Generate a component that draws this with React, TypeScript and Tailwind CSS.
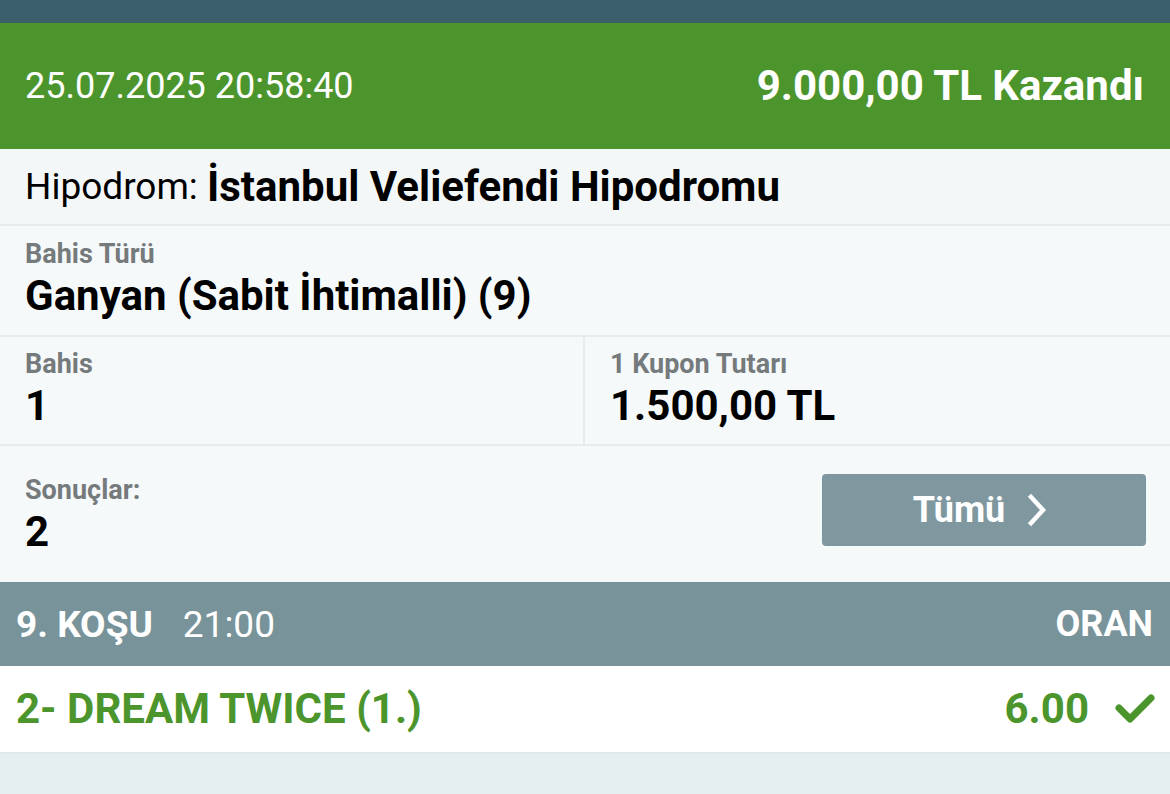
import React from 'react';

const font = { fontFamily: 'Roboto, "Noto Sans", sans-serif' };

const Chevron = () => (
  <svg className="ml-5 h-9 w-6" viewBox="0 0 24 36" fill="none" stroke="currentColor" strokeWidth="4.5" strokeLinecap="square">
    <polyline points="6,5 18,18 6,31" />
  </svg>
);

const Check = () => (
  <svg className="ml-[26px] h-[30px] w-[40px]" viewBox="0 0 40 30" fill="none" stroke="currentColor" strokeWidth="7" strokeLinecap="round" strokeLinejoin="round">
    <path d="M36 4 15 25 4 14" />
  </svg>
);

const Field = ({ label, value }: { label: string; value: string }) => (
  <div className="flex flex-col">
    <span className="text-[27px] font-bold leading-[30px] text-[#757a7c]">{label}</span>
    <span className="mt-[4px] text-[42px] font-bold leading-[46px] text-black">{value}</span>
  </div>
);

export default function App() {
  return (
    <div className="flex h-[794px] w-[1170px] flex-col overflow-hidden bg-[#e5eef1]" style={font}>
      <div className="h-[23px] bg-[#3b5f6b]" />
      <div className="flex h-[126px] items-center justify-between bg-[#4c952c] pl-[25px] pr-[26px] text-white">
        <span className="text-[36px] leading-none">25.07.2025 20:58:40</span>
        <span className="text-[42px] font-bold leading-none">9.000,00 TL Kazandı</span>
      </div>
      <div className="flex h-[77px] items-center border-b-2 border-[#e4ecee] bg-[#f4f7f8] pl-[25px] text-[37px] leading-none text-black">
        Hipodrom:&nbsp;<span className="text-[42px] font-bold">İstanbul Veliefendi Hipodromu</span>
      </div>
      <div className="flex h-[111px] flex-col justify-center border-b-2 border-[#e4ecee] bg-[#f5f9fa] pl-[25px] pb-[4px]">
        <Field label="Bahis Türü" value="Ganyan (Sabit İhtimalli) (9)" />
      </div>
      <div className="grid h-[109px] grid-cols-2 border-b-2 border-[#e4ecee] bg-[#f5f9fa]">
        <div className="flex flex-col justify-center border-r-2 border-[#e4ecee] pl-[25px] pb-[4px]">
          <Field label="Bahis" value="1" />
        </div>
        <div className="flex flex-col justify-center pl-[25px] pb-[4px]">
          <Field label="1 Kupon Tutarı" value="1.500,00 TL" />
        </div>
      </div>
      <div className="flex h-[136px] items-center justify-between bg-[#f5f9fa] pl-[25px] pr-[24px]">
        <div className="pt-[2px]">
          <Field label="Sonuçlar:" value="2" />
        </div>
        <button className="mb-[8px] flex h-[72px] w-[324px] items-center justify-center rounded-[4px] bg-[#7f98a0] pr-[6px] text-[36px] font-bold text-white">
          Tümü
          <Chevron />
        </button>
      </div>
      <div className="flex h-[84px] items-center justify-between bg-[#78939a] pl-[16px] pr-[17px] text-[37px] leading-none text-white">
        <div className="flex items-center">
          <span className="font-bold">9. KOŞU</span>
          <span className="ml-[30px]">21:00</span>
        </div>
        <span className="text-[36px] font-bold">ORAN</span>
      </div>
      <div className="flex h-[86px] items-center justify-between bg-white pl-[16px] pr-[15px] text-[42px] font-bold leading-none text-[#4c952c]">
        <span>2- DREAM TWICE (1.)</span>
        <div className="flex items-center">
          <span>6.00</span>
          <Check />
        </div>
      </div>
      <div className="flex-1 border-t-2 border-[#e0e8ea] bg-[#e5eef1]" />
    </div>
  );
}
